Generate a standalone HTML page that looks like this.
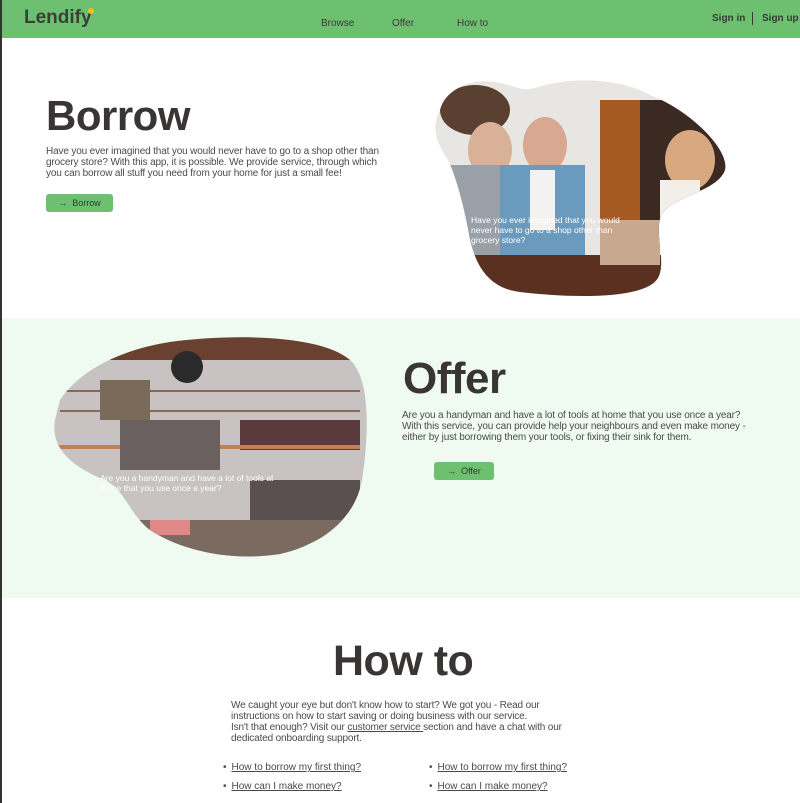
<!DOCTYPE html>
<html><head><meta charset="utf-8"><style>
*{margin:0;padding:0;box-sizing:border-box}
body{width:800px;height:803px;overflow:hidden;background:#fff;font-family:"Liberation Sans",sans-serif;color:#3d3d3d;position:relative;border-left:2px solid #333}
.nav{position:absolute;left:0;top:0;width:800px;height:38px;background:#6cc070}
.a{position:absolute;font-size:10px;color:#3a3a3a}
h1{position:absolute;font-weight:900;color:#3a3535;letter-spacing:-0.5px}
.p{position:absolute;font-size:10px;line-height:11px;color:#4a4a4a;letter-spacing:-0.15px}
.btn{position:absolute;background:#6cc070;border-radius:3px;font-size:9px;color:#2d3d2d;display:flex;align-items:center;justify-content:center}
.ov{position:absolute;font-size:8.5px;line-height:10px;color:#fff}
ul{position:absolute;list-style:none;font-size:10px;color:#4a4a4a}
li{margin-bottom:8px;height:11px}
li:before{content:"•";margin-right:5px}
li span{text-decoration:underline}
</style></head><body>
<div class="nav">
<div style="position:absolute;left:22px;top:7px;font-size:19px;font-weight:bold;color:#3a3f3a">Lendify</div>
<div style="position:absolute;left:86px;top:8px;width:6px;height:6px;border-radius:50%;background:#f0c020"></div>
<div class="a" style="left:319px;top:18px">Browse</div>
<div class="a" style="left:390px;top:18px">Offer</div>
<div class="a" style="left:455px;top:18px">How to</div>
<div class="a" style="left:710px;top:13px;font-weight:bold">Sign in</div>
<div style="position:absolute;left:750px;top:12px;width:1px;height:13px;background:#3a3a3a"></div>
<div class="a" style="left:760px;top:13px;font-weight:bold">Sign up</div>
</div>

<h1 style="left:44px;top:92px;font-size:42px">Borrow</h1>
<div class="p" style="left:44px;top:146px;width:345px">Have you ever imagined that you would never have to go to a shop other than grocery store? With this app, it is possible. We provide service, through which you can borrow all stuff you need from your home for just a small fee!</div>
<div class="btn" style="left:44px;top:194px;width:67px;height:18px">→&nbsp;&nbsp;Borrow</div>

<svg style="position:absolute;left:-2px;top:0" width="800" height="803">
<defs>
<clipPath id="c1"><path d="M440,110 C445,90 470,78 495,82 C515,85 520,92 535,88 C570,76 620,78 650,95 C690,110 730,150 725,170 C718,190 680,195 665,210 C650,225 668,260 658,278 C645,300 570,298 520,292 C485,288 475,260 470,240 C465,210 455,170 445,155 C435,140 432,125 440,110Z"/></clipPath>
<clipPath id="c2"><path d="M60,400 C80,370 120,350 170,342 C230,334 320,334 350,360 C372,380 368,440 362,480 C355,520 320,545 280,554 C230,562 180,550 150,530 C130,515 125,490 105,480 C75,468 50,450 55,420 Z"/></clipPath>
</defs>
<g clip-path="url(#c1)">
<rect x="420" y="70" width="320" height="240" fill="#e8e6e2"/>
<rect x="600" y="100" width="60" height="150" fill="#a45a22"/>
<rect x="640" y="100" width="100" height="140" fill="#3a2a22"/>
<ellipse cx="690" cy="160" rx="25" ry="30" fill="#d8a880"/>
<rect x="660" y="180" width="40" height="80" fill="#f2eeea"/>
<ellipse cx="475" cy="110" rx="35" ry="25" fill="#5a4030"/>
<ellipse cx="490" cy="150" rx="22" ry="28" fill="#d9b098"/>
<rect x="440" y="165" width="60" height="110" fill="#9aa0a8"/>
<ellipse cx="545" cy="145" rx="22" ry="28" fill="#d8a890"/>
<rect x="500" y="165" width="85" height="100" fill="#6a9bbf"/>
<rect x="530" y="170" width="25" height="60" fill="#f4f2ee"/>
<rect x="420" y="255" width="320" height="50" fill="#5a3020"/>
<rect x="600" y="220" width="60" height="45" fill="#c9a890"/>
</g>
<g clip-path="url(#c2)">
<rect x="40" y="330" width="340" height="240" fill="#c8c2c2"/>
<rect x="40" y="330" width="340" height="30" fill="#6a4030"/>
<circle cx="187" cy="367" r="16" fill="#2a2a2a"/>
<rect x="60" y="390" width="300" height="2" fill="#8a6a55"/>
<rect x="60" y="410" width="300" height="2" fill="#8a6a55"/>
<rect x="240" y="420" width="120" height="30" fill="#5a3a3a"/>
<rect x="40" y="445" width="320" height="4" fill="#c08050"/>
<rect x="100" y="380" width="50" height="40" fill="#7a6a5a"/>
<rect x="120" y="420" width="100" height="50" fill="#6a6060"/>
<rect x="250" y="480" width="110" height="60" fill="#5a5050"/>
<rect x="40" y="520" width="340" height="50" fill="#7a6a60"/>
<rect x="150" y="520" width="40" height="15" fill="#e08888"/>
</g>
</svg>
<div class="ov" style="left:469px;top:215px;width:160px">Have you ever imagined that you would never have to go to a shop other than grocery store?</div>

<div style="position:absolute;left:0;top:318px;width:800px;height:280px;background:#effaf1;z-index:-1"></div>
<div class="ov" style="left:98px;top:473px;width:180px">Are you a handyman and have a lot of tools at home that you use once a year?</div>
<h1 style="left:401px;top:354px;font-size:44px">Offer</h1>
<div class="p" style="left:400px;top:410px;width:350px">Are you a handyman and have a lot of tools at home that you use once a year? With this service, you can provide help your neighbours and even make money - either by just borrowing them your tools, or fixing their sink for them.</div>
<div class="btn" style="left:432px;top:462px;width:60px;height:18px">→&nbsp;&nbsp;Offer</div>

<h1 style="left:331px;top:637px;font-size:43px">How to</h1>
<div class="p" style="left:229px;top:700px;width:350px">We caught your eye but don't know how to start? We got you - Read our instructions on how to start saving or doing business with our service.<br>Isn't that enough? Visit our <span style="text-decoration:underline">customer service </span>section and have a chat with our dedicated onboarding support.</div>
<ul style="left:221px;top:762px"><li><span>How to borrow my first thing?</span></li><li><span>How can I make money?</span></li></ul>
<ul style="left:427px;top:762px"><li><span>How to borrow my first thing?</span></li><li><span>How can I make money?</span></li></ul>
</body></html>
